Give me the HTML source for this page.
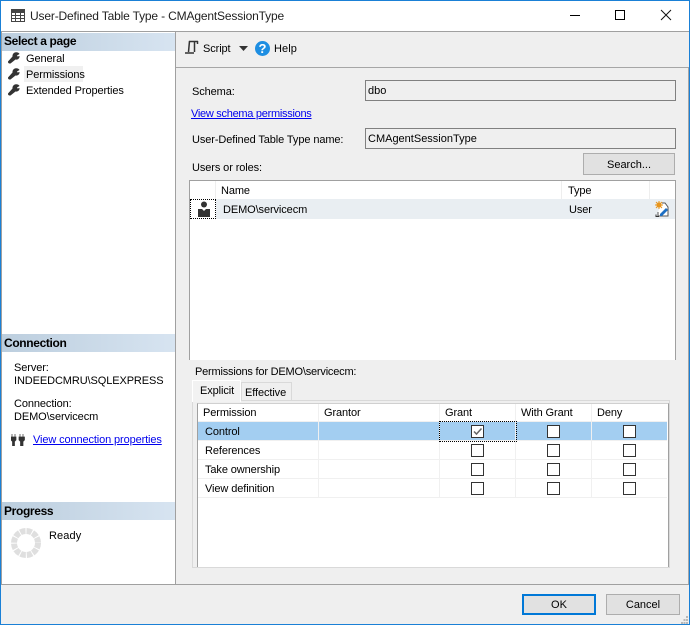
<!DOCTYPE html>
<html><head><meta charset="utf-8"><style>
html,body{margin:0;padding:0;background:#fff}
body{width:690px;height:625px;position:relative;overflow:hidden;font:11px/18px "Liberation Sans",sans-serif;color:#000}
div,span.t,a,svg{position:absolute}
.t{white-space:nowrap;height:16px;letter-spacing:-.1px}
a{color:#0000ee;text-decoration:underline;white-space:nowrap}
.h{left:2px;width:173px;background:linear-gradient(90deg,#bccede,#d7e4f1);font-weight:bold;font-size:12px;height:18px;line-height:18px;text-indent:2px;letter-spacing:-.35px}
.inp{left:365px;width:309px;height:19px;border:1px solid #808080;background:#efefef;line-height:20px;text-indent:2px}
.cb{width:11px;height:11px;border:1px solid #333;background:#fff}
.sep{background:#f0f0f0}
.btn{background:#e1e1e1;text-align:center}
</style></head><body>
<div style="left:0;top:0;width:688px;height:623px;border:1px solid #1a80d6"></div>
<svg style="left:11px;top:9px" width="14" height="13" viewBox="0 0 14 13"><path d="M.5.5h13v12H.5zM.5 3.5h13M.5 6.5h13M.5 9.500h13M4.500 3v9M9.500 3v9" fill="none" stroke="#444"/><path d="M0 0h14v3H0z" fill="#444"/></svg>
<span class="t" style="left:30px;top:8px;font-size:12px;line-height:16px;letter-spacing:-.16px;color:#222">User-Defined Table Type - CMAgentSessionType</span>
<svg style="left:570px;top:8px" width="110" height="16" viewBox="0 0 110 16"><path d="M0 7.500h10" stroke="#000"/><path d="M45.500 2.500h9v9h-9z" fill="none" stroke="#000"/><path d="M91 2l10 10M101 2L91 12" stroke="#111" fill="none"/></svg>
<div style="left:1px;top:31px;width:688px;height:1px;background:#a0a0a0"></div>
<div style="left:1px;top:32px;width:688px;height:552px;background:#efefef"></div>
<div style="left:1px;top:32px;width:174px;height:552px;background:#fff"></div>
<div style="left:1px;top:32px;width:1px;height:552px;background:#a0a0a0"></div>
<div style="left:175px;top:32px;width:1px;height:552px;background:#a0a0a0"></div>
<div style="left:1px;top:584px;width:688px;height:1px;background:#a0a0a0"></div>
<div style="left:176px;top:67px;width:512px;height:1px;background:#a6a6a6"></div>
<div style="left:688px;top:67px;width:1px;height:517px;background:#a6a6a6"></div>
<div class="h" style="top:33px;line-height:17px">Select a page</div>
<div class="h" style="top:334px;line-height:19px">Connection</div>
<div class="h" style="top:502px;line-height:19px">Progress</div>
<svg style="left:8px;top:52px" width="12" height="44" viewBox="0 0 12 44"><g fill="#333"><path d="M7 0.500c2-.6 4 .3 4.500 1.500L9 3.500l.5 1 2-.5c.3 2-1.500 4-4 3.500L2.500 11.500H1L0 10.500V9.500L4.500 4.500C4.300 2.500 5.500.8 7 .5z"/><path d="M7 16.500c2-.6 4 .3 4.500 1.500L9 19.500l.5 1 2-.5c.3 2-1.500 4-4 3.500L2.500 27.500H1L0 26.500V25.500L4.500 20.500C4.300 18.500 5.500 16.800 7 16.500z"/><path d="M7 32.500c2-.6 4 .3 4.500 1.500L9 35.500l.5 1 2-.5c.3 2-1.500 4-4 3.500L2.500 43.500H1L0 42.500V41.500L4.500 36.500C4.300 34.500 5.500 32.800 7 32.500z"/></g></svg>
<div style="left:24px;top:66px;width:59px;height:16px;background:#f0f0f0"></div>
<span class="t" style="left:26px;top:50px">General</span>
<span class="t" style="left:26px;top:66px">Permissions</span>
<span class="t" style="left:26px;top:82px">Extended Properties</span>
<span class="t" style="left:14px;top:359px">Server:</span>
<span class="t" style="left:14px;top:372px">INDEEDCMRU\SQLEXPRESS</span>
<span class="t" style="left:14px;top:395px">Connection:</span>
<span class="t" style="left:14px;top:408px">DEMO\servicecm</span>
<svg style="left:11px;top:434px" width="14" height="12" viewBox="0 0 14 12"><path d="M1 0v3M4 0v3M0 3h5v3L3.500 7.500V12h-2V7.500L0 6zM9 0v3M12 0v3M8 3h5.500v3L12 7.500V12h-2.500V7.500L8 6z" fill="#333" stroke="#333" stroke-width=".7"/></svg>
<a style="left:33px;top:431px;letter-spacing:-.12px">View connection properties</a>
<svg style="left:11px;top:528px" width="30" height="30" viewBox="0 0 30 30"><circle cx="15" cy="15" r="12" fill="none" stroke="#dfdfdf" stroke-width="6" stroke-dasharray="5.300 1"/></svg>
<span class="t" style="left:49px;top:527px;letter-spacing:.1px">Ready</span>

<svg style="left:185px;top:40px" width="14" height="15" viewBox="0 0 14 15"><path d="M4 1.500h9M12.500 1v3M4.500 1L3.500 12M9.500 1.500V12M0 13h9" fill="none" stroke="#333" stroke-width="1.500"/></svg>
<span class="t" style="left:203px;top:40px">Script</span>
<svg style="left:239px;top:46px" width="9" height="5" viewBox="0 0 9 5"><path d="M0 0h9L4.500 5z" fill="#333"/></svg>
<div style="left:255px;top:41px;width:15px;height:15px;border-radius:50%;background:#1d8ee2;color:#fff;font-weight:bold;font-size:13px;line-height:15px;text-align:center">?</div>
<span class="t" style="left:274px;top:40px;letter-spacing:.1px">Help</span>

<span class="t" style="left:192px;top:83px">Schema:</span>
<div class="inp" style="top:80px">dbo</div>
<a style="left:191px;top:105px;letter-spacing:-.28px">View schema permissions</a>
<span class="t" style="left:192px;top:131px">User-Defined Table Type name:</span>
<div class="inp" style="top:128px">CMAgentSessionType</div>
<span class="t" style="left:192px;top:159px">Users or roles:</span>
<div class="btn" style="left:583px;top:153px;width:90px;height:20px;border:1px solid #adadad;line-height:22px">Search...</div>

<div style="left:189px;top:180px;width:485px;height:180px;border:1px solid #a0a0a0;border-bottom:0;background:#fff"></div>
<div style="left:190px;top:199px;width:485px;height:20px;background:#e9eef2"></div>
<div style="left:215px;top:181px;width:1px;height:18px;background:#eee"></div>
<div style="left:561px;top:181px;width:1px;height:18px;background:#eee"></div>
<div style="left:649px;top:181px;width:1px;height:18px;background:#eee"></div>
<span class="t" style="left:221px;top:182px">Name</span>
<span class="t" style="left:568px;top:182px">Type</span>
<div style="left:190px;top:199px;width:24px;height:18px;border:1px dotted #000;background:#fff"></div>
<svg style="left:198px;top:201px" width="13" height="16" viewBox="0 0 13 16"><circle cx="6" cy="3.500" r="3" fill="#333"/><path d="M0 8h4l2 2 2-2h4v8H0z" fill="#333"/></svg>
<span class="t" style="left:223px;top:201px">DEMO\servicecm</span>
<span class="t" style="left:569px;top:201px">User</span>
<svg style="left:655px;top:201px" width="15" height="16" viewBox="0 0 15 16"><path d="M7 2h3l3 4v9H3v-4" fill="#fff" stroke="#555"/><path d="M1 13.500v2h3" fill="none" stroke="#333"/><circle cx="4" cy="4" r="2.500" fill="#e8951c"/><path d="M4 0v8M0 4h8M1 1l6 6M7 1L1 7" stroke="#e8951c"/><path d="M5 13l6-6 2 2-6 6H5z" fill="#1c6fc4"/></svg>

<div style="left:176px;top:360px;width:512px;height:224px;background:#efefef"></div>
<span class="t" style="left:195px;top:363px;letter-spacing:-.2px">Permissions for DEMO\servicecm:</span>
<div style="left:192px;top:400px;width:476px;height:166px;border:1px solid #d9d9d9"></div>
<div style="left:241px;top:382px;width:49px;height:18px;border:1px solid #d9d9d9;border-bottom:0"></div>
<div style="left:192px;top:380px;width:47px;height:21px;border:1px solid #fff;border-bottom:0;background:#f2f2f2"></div>
<span class="t" style="left:200px;top:382px">Explicit</span>
<span class="t" style="left:245px;top:384px">Effective</span>
<div style="left:197px;top:403px;width:470px;height:163px;border:1px solid #a0a0a0;border-bottom:0;border-top:1px solid #d0d0d0;background:#fff"></div>
<div style="left:198px;top:422px;width:469px;height:18px;background:#a3cef1"></div>
<div class="sep" style="left:198px;top:421px;width:469px;height:1px"></div>
<div class="sep" style="left:198px;top:440px;width:469px;height:1px"></div>
<div class="sep" style="left:198px;top:459px;width:469px;height:1px"></div>
<div class="sep" style="left:198px;top:478px;width:469px;height:1px"></div>
<div class="sep" style="left:198px;top:497px;width:469px;height:1px"></div>
<div class="sep" style="left:318px;top:404px;width:1px;height:93px"></div>
<div class="sep" style="left:439px;top:404px;width:1px;height:93px"></div>
<div class="sep" style="left:515px;top:404px;width:1px;height:93px"></div>
<div class="sep" style="left:591px;top:404px;width:1px;height:93px"></div>
<span class="t" style="left:203px;top:404px">Permission</span>
<span class="t" style="left:324px;top:404px">Grantor</span>
<span class="t" style="left:445px;top:404px">Grant</span>
<span class="t" style="left:521px;top:404px">With Grant</span>
<span class="t" style="left:597px;top:404px">Deny</span>
<span class="t" style="left:205px;top:423px">Control</span>
<span class="t" style="left:205px;top:442px">References</span>
<span class="t" style="left:205px;top:461px">Take ownership</span>
<span class="t" style="left:205px;top:480px">View definition</span>
<div style="left:439px;top:421px;width:76px;height:19px;border:1px dotted #000"></div>
<div class="cb" style="left:471px;top:425px"></div>
<svg style="left:472px;top:426px" width="11" height="11" viewBox="0 0 11 11"><path d="M2 5.500l2.500 2.500 5-5.500" fill="none" stroke="#666" stroke-width="1.500"/></svg>
<div class="cb" style="left:547px;top:425px"></div><div class="cb" style="left:623px;top:425px"></div>
<div class="cb" style="left:471px;top:444px"></div><div class="cb" style="left:547px;top:444px"></div><div class="cb" style="left:623px;top:444px"></div>
<div class="cb" style="left:471px;top:463px"></div><div class="cb" style="left:547px;top:463px"></div><div class="cb" style="left:623px;top:463px"></div>
<div class="cb" style="left:471px;top:482px"></div><div class="cb" style="left:547px;top:482px"></div><div class="cb" style="left:623px;top:482px"></div>

<div style="left:1px;top:585px;width:688px;height:39px;background:#efefef"></div>
<div class="btn" style="left:522px;top:594px;width:70px;height:17px;border:2px solid #0078d7;line-height:19px">OK</div>
<div class="btn" style="left:606px;top:594px;width:72px;height:19px;border:1px solid #adadad;line-height:21px">Cancel</div>
<svg style="left:681px;top:616px" width="8" height="8" viewBox="0 0 8 8"><path d="M5 0h2v2H5zM2.500 3h2v2h-2zM5 3h2v2H5zM0 6h2v2H0zM2.500 6h2v2h-2zM5 6h2v2H5z" fill="#b8b8b8"/></svg>
</body></html>
